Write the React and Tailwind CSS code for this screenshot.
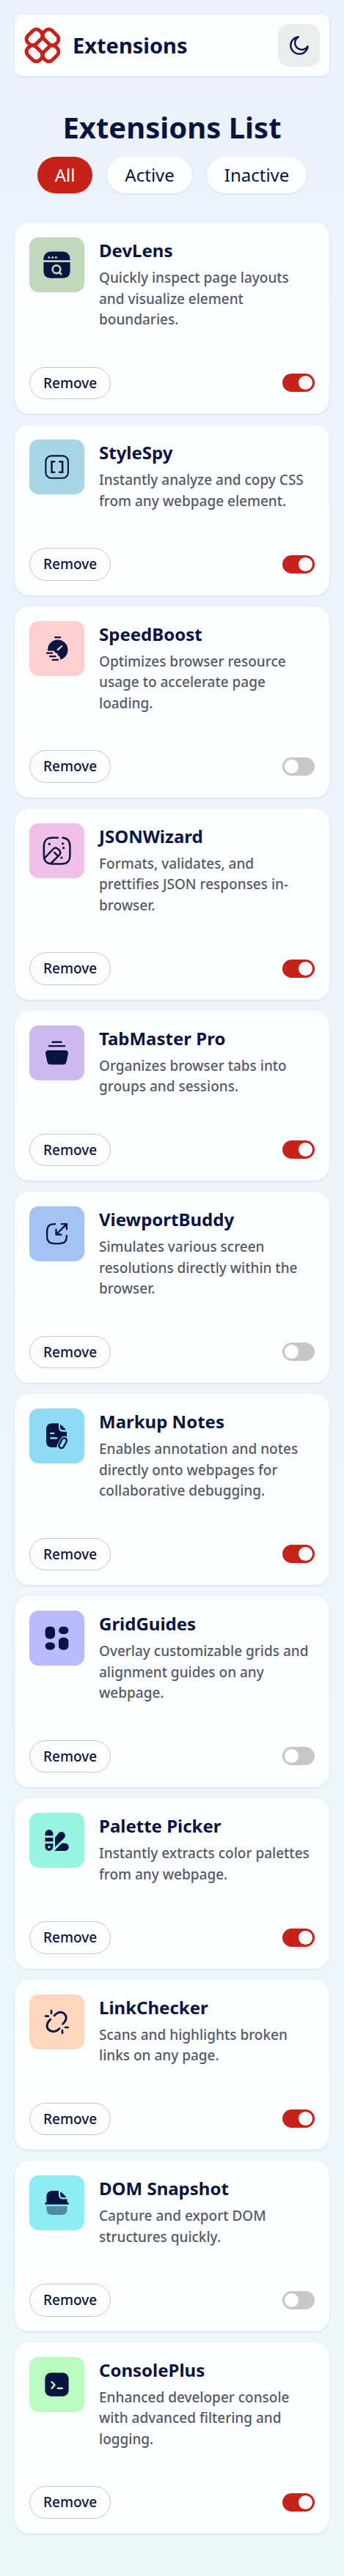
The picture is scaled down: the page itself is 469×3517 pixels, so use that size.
import { useState } from "react";

const NAVY = "#091540";

function Tile({ bg, children }) {
  return (
    <svg viewBox="0 0 60 60" className="size-[75px] shrink-0" aria-hidden="true">
      <rect width="60" height="60" rx="10" fill={bg} />
      {children}
    </svg>
  );
}

const line = { fill: "none", stroke: NAVY, strokeLinecap: "round", strokeLinejoin: "round" };

function DevLensIcon() {
  const bg = "#c1d8be";
  return (
    <Tile bg={bg}>
      <path fill={NAVY} d="M15.5 25c0-6 2.600-9.500 8.500-9.500h12c5.900 0 8.500 3.500 8.500 9.500zM15.500 27.200h29V36c0 6-2.500 8.500-8.500 8.500H24c-6 0-8.500-2.500-8.500-8.500z" />
      <g fill={bg}>
        <circle cx="21.400" cy="21.900" r="1.200" />
        <circle cx="25.200" cy="21.900" r="1.200" />
        <circle cx="29" cy="21.900" r="1.200" />
      </g>
      <g fill="none" stroke={bg} strokeWidth="2.100" strokeLinecap="round">
        <circle cx="29.600" cy="35" r="4.300" />
        <path d="M32.900 38.300l1.700 1.900" />
      </g>
    </Tile>
  );
}

function StyleSpyIcon() {
  return (
    <Tile bg="#a8d6e4">
      <rect x="17.900" y="17.900" width="24.400" height="24.300" rx="6" {...line} strokeWidth="1.700" />
      <path d="M27.400 24.200h-3v11.600h3M33 24.200h3.100v11.600H33" {...line} strokeWidth="2" strokeLinejoin="miter" />
    </Tile>
  );
}

function SpeedBoostIcon() {
  const bg = "#ffcfd2";
  return (
    <Tile bg={bg}>
      <path d="M28.200 17.700h5.400" {...line} strokeWidth="1.900" />
      <circle cx="31" cy="31.400" r="11" fill={NAVY} />
      <path d="M17 32.300h8.300c1.900 0 2.500.8 2.800 2 2.100.3 3.200 1.400 3.200 3.200 1.800.7 2.600 2 2.300 3.600V45H17z" fill={bg} />
      <path d="M31 31.300l4.200-3.900" fill="none" stroke={bg} strokeWidth="1.900" strokeLinecap="round" />
      <path d="M19.300 34.900h5.500M22.500 38.500h5.900M25.400 42.300h5.700" {...line} strokeWidth="1.900" />
    </Tile>
  );
}

function JsonWizardIcon() {
  return (
    <Tile bg="#f1c0e8">
      <path d="M31 15.800h-5.500c-6.700 0-9.600 2.700-9.600 9.500v9.400c0 6.700 2.800 9.600 9.600 9.600h9.300c6.700 0 9.500-2.900 9.500-9.600v-9.400c0-6.100-2.300-9.100-7.900-9.500" {...line} strokeWidth="2" />
      <path d="M16.200 38.500l9.700-10.300c1.600-1.700 3.500-1.800 5.200-.3l1.500 1.500c1.700 1.700 1.700 3.400.2 5.100l-9.200 9.300M27.400 32l3.500 3.500" {...line} strokeWidth="2" />
      <g fill={NAVY}>
        <circle cx="21.900" cy="22.700" r="1.300" />
        <circle cx="36.500" cy="22.300" r="1.300" />
        <circle cx="37.300" cy="26.900" r="1.300" />
        <circle cx="35.200" cy="37.600" r="1.300" />
      </g>
    </Tile>
  );
}

function TabMasterIcon() {
  return (
    <Tile bg="#cfbaf0">
      <path d="M25.200 18.200h9.600M21.500 22.500h16.900" {...line} strokeWidth="1.900" />
      <path fill={NAVY} d="M21 27.200h18c2.400 0 3.700 1.400 3.300 3.700l-1.700 8.200c-.5 2.500-1.500 3.600-3.800 3.600H23.200c-2.300 0-3.300-1.100-3.800-3.600l-1.700-8.200c-.4-2.300.9-3.700 3.300-3.700z" />
    </Tile>
  );
}

function ViewportIcon() {
  return (
    <Tile bg="#a3c4f3">
      <path d="M28 19.300c-6.400 0-8.700 2.300-8.700 8.700v4c0 6.400 2.300 8.700 8.700 8.700h4c6.400 0 8.700-2.300 8.700-8.700" {...line} strokeWidth="1.900" />
      <path d="M29.200 30.800L40.700 19.300M35.200 19.300h5.500v5.500M29.200 25.300v5.500h5.500" {...line} strokeWidth="1.900" />
    </Tile>
  );
}

function MarkupIcon() {
  const bg = "#90dbf4";
  return (
    <Tile bg={bg}>
      <path fill={NAVY} d="M32 16.100h-6.500c-5.200 0-7.100 2.200-7.100 7.300v12c0 5 2 7 7.100 7h10c4.100 0 5.300-2.600 5.300-7v-10h-3.600c-3.600 0-5.200-1.600-5.200-5.200z" />
      <path fill={NAVY} d="M33.600 17.300c2.300 1.500 4.700 3.800 6.400 6.100h-3c-2.500 0-3.400-.9-3.400-3.400z" />
      <path d="M23.300 27.100h3.300M23.300 32.400h6.500" fill="none" stroke={bg} strokeWidth="1.900" strokeLinecap="round" />
      <g transform="rotate(29 36.800 37.400)">
        <rect x="32.300" y="29.800" width="9" height="17" rx="4.500" fill={bg} />
        <rect x="34.100" y="32" width="5.400" height="11.800" rx="2.700" {...line} strokeWidth="1.900" />
      </g>
    </Tile>
  );
}

function GridIcon() {
  return (
    <Tile bg="#b9baff">
      <g fill={NAVY}>
        <rect x="17.300" y="17.300" width="10.700" height="13.400" rx="4.200" />
        <rect x="32" y="17.300" width="10.700" height="8.200" rx="4.100" />
        <rect x="17.300" y="34.500" width="10.700" height="8.200" rx="4.100" />
        <rect x="32" y="29.300" width="10.700" height="13.400" rx="4.200" />
      </g>
    </Tile>
  );
}

function PaletteIcon() {
  const bg = "#98f5e1";
  return (
    <Tile bg={bg}>
      <g fill={NAVY}>
        <path d="M17.200 24.900v-2.100a4.350 4.350 0 0 1 8.700 0v2.100zM17.200 27.200h8.700v4.100h-8.700zM17.200 33.500h8.700v3.700a4.350 4.350 0 0 1-8.700 0z" />
        <path d="M28 37.400V27l3.500-4.300c2-2.300 4.600-2.400 6.300-.8 1.800 1.800 1.700 4.200-.1 6z" />
        <path d="M27.200 41.600l7.200-7.400c.8-.7 1.500-1 2.700-1h1.700a4.200 4.200 0 0 1 0 8.400z" />
      </g>
      <circle cx="21.600" cy="37.300" r="1.400" fill={bg} />
    </Tile>
  );
}

function LinkIcon() {
  return (
    <Tile bg="#ffd7be">
      <path d="M27.300 23.100c3.300-4.300 8.100-4.800 11-1.900s2.500 7.200-1.800 11M23.100 27.300c-4.700 3.900-4.700 8.500-2 11.200 3.100 3 8.300 2.800 11.700-1.200" {...line} strokeWidth="2.300" />
      <path d="M24 17.700v3M17.700 23.700h3M36 39.200v3M39.200 36h3" {...line} strokeWidth="2.100" />
    </Tile>
  );
}

function SnapshotIcon() {
  return (
    <Tile bg="#8eecf5">
      <path fill={NAVY} d="M32 16.700h-5.700c-5.200 0-7.600 2-7.600 7.300v5.600h22.600V26h-4c-3.700 0-5.300-1.600-5.300-5.200z" />
      <path fill={NAVY} d="M33.800 17.800c2.300 1.300 5 3.900 6.500 6.400h-3.200c-2.400 0-3.300-.8-3.300-3.200z" />
      <path d="M18 30.700h24" {...line} strokeWidth="2.100" />
      <path fill={NAVY} opacity=".45" d="M18.700 33.500h22.600v2.400c0 5.200-2 7.300-7.300 7.300h-8c-5.300 0-7.300-2.100-7.300-7.300z" />
    </Tile>
  );
}

function ConsoleIcon() {
  const bg = "#b9fbc0";
  return (
    <Tile bg={bg}>
      <rect x="17.100" y="17.100" width="25.800" height="25.800" rx="6.500" fill={NAVY} />
      <path d="M24.500 27.200l3.200 3.400-3.200 3.500M31 34.200h4.800" fill="none" stroke={bg} strokeWidth="1.900" strokeLinecap="round" strokeLinejoin="round" />
    </Tile>
  );
}

const EXTENSIONS = [
  { name: "DevLens", text: "Quickly inspect page layouts and visualize element boundaries.", Icon: DevLensIcon, active: true },
  { name: "StyleSpy", text: "Instantly analyze and copy CSS from any webpage element.", Icon: StyleSpyIcon, active: true },
  { name: "SpeedBoost", text: "Optimizes browser resource usage to accelerate page loading.", Icon: SpeedBoostIcon, active: false },
  { name: "JSONWizard", text: "Formats, validates, and prettifies JSON responses in-browser.", Icon: JsonWizardIcon, active: true },
  { name: "TabMaster Pro", text: "Organizes browser tabs into groups and sessions.", Icon: TabMasterIcon, active: true },
  { name: "ViewportBuddy", text: "Simulates various screen resolutions directly within the browser.", Icon: ViewportIcon, active: false },
  { name: "Markup Notes", text: "Enables annotation and notes directly onto webpages for collaborative debugging.", Icon: MarkupIcon, active: true },
  { name: "GridGuides", text: "Overlay customizable grids and alignment guides on any webpage.", Icon: GridIcon, active: false },
  { name: "Palette Picker", text: "Instantly extracts color palettes from any webpage.", Icon: PaletteIcon, active: true },
  { name: "LinkChecker", text: "Scans and highlights broken links on any page.", Icon: LinkIcon, active: true },
  { name: "DOM Snapshot", text: "Capture and export DOM structures quickly.", Icon: SnapshotIcon, active: false },
  { name: "ConsolePlus", text: "Enhanced developer console with advanced filtering and logging.", Icon: ConsoleIcon, active: true },
];

function Logo() {
  return (
    <svg viewBox="0 0 50 50" className="size-[50px]" fill="none" stroke="#c7221a" strokeWidth="5" aria-hidden="true">
      {[0, 90, 180, 270].map((angle) => (
        <g key={angle} transform={`rotate(${angle} 25 25)`}>
          <rect x="2.500" y="6" width="23" height="16" rx="7" transform="rotate(-45 14 14)" />
        </g>
      ))}
    </svg>
  );
}

function Moon() {
  return (
    <svg viewBox="0 0 22 22" className="size-7" fill="none" stroke={NAVY} strokeWidth="1.833" strokeLinecap="round" strokeLinejoin="round" aria-hidden="true">
      <path d="M20.125 11.877A7.333 7.333 0 1 1 10.124 1.875a9.168 9.168 0 1 0 10.001 10.002Z" />
    </svg>
  );
}

function Card({ item, onToggle, onRemove }) {
  const { name, text, Icon, active } = item;
  return (
    <li className="flex flex-col gap-[50px] rounded-[20px] bg-[#fcfdff] p-5 shadow-[0_1px_3px_#cddcf5]">
      <div className="flex gap-5">
        <Icon />
        <div className="flex flex-col gap-[5px]">
          <h2 className="text-2xl/9 font-bold">{name}</h2>
          <p className="text-[19px] leading-normal font-medium text-[#545969]">{text}</p>
        </div>
      </div>
      <div className="flex items-center justify-between">
        <button
          type="button"
          onClick={onRemove}
          className="rounded-full border border-[#c7c7c7] px-[18px] py-[7px] text-[19px] leading-normal font-medium"
        >
          Remove
        </button>
        <input
          type="checkbox"
          aria-label={`Enable ${name}`}
          checked={active}
          onChange={onToggle}
          className="flex h-[25px] w-11 cursor-pointer appearance-none rounded-full bg-[#c7c7c7] p-[3px] before:size-[19px] before:rounded-full before:bg-[#fcfdff] checked:justify-end checked:bg-[#c7221a]"
        />
      </div>
    </li>
  );
}

export default function App() {
  const [items, setItems] = useState(EXTENSIONS);
  const [filter, setFilter] = useState("All");

  const shown = items.filter((item) => filter === "All" || item.active === (filter === "Active"));
  const toggle = (name) =>
    setItems((list) => list.map((item) => (item.name === name ? { ...item, active: !item.active } : item)));
  const remove = (name) => setItems((list) => list.filter((item) => item.name !== name));

  return (
    <div className="flex min-h-screen flex-col gap-10 bg-linear-to-b from-[#ebf2fc] to-[#eef8f9] px-5 pt-5 pb-[58px] font-['Noto_Sans',sans-serif] text-[#091540]">
      <header className="flex items-center justify-between rounded-[10px] bg-[#fcfdff] p-[13px] shadow-[0_1px_3px_#cddcf5]">
        <div className="flex items-center gap-4">
          <Logo />
          <span className="text-[29px]/[44px] font-bold">Extensions</span>
        </div>
        <button type="button" aria-label="Switch to dark theme" className="flex h-[58px] w-[57px] items-center justify-center rounded-[15px] bg-[#ebecec]">
          <Moon />
        </button>
      </header>
      <main className="flex flex-col gap-10">
        <div className="flex flex-col items-center gap-[10px]">
          <h1 className="text-[40px]/[60px] font-bold">Extensions List</h1>
          <div className="flex gap-5">
            {["All", "Active", "Inactive"].map((label) => (
              <button
                key={label}
                type="button"
                aria-pressed={filter === label}
                onClick={() => setFilter(label)}
                className={
                  filter === label
                    ? "rounded-full bg-[#c7221a] px-6 py-[7px] text-2xl/9 text-[#fcfdff] shadow-[0_1px_3px_#cddcf5]"
                    : "rounded-full bg-[#fcfdff] px-6 py-[7px] text-2xl/9 shadow-[0_1px_3px_#cddcf5]"
                }
              >
                {label}
              </button>
            ))}
          </div>
        </div>
        <ul className="flex flex-col gap-[15px]">
          {shown.map((item) => (
            <Card key={item.name} item={item} onToggle={() => toggle(item.name)} onRemove={() => remove(item.name)} />
          ))}
        </ul>
      </main>
    </div>
  );
}
